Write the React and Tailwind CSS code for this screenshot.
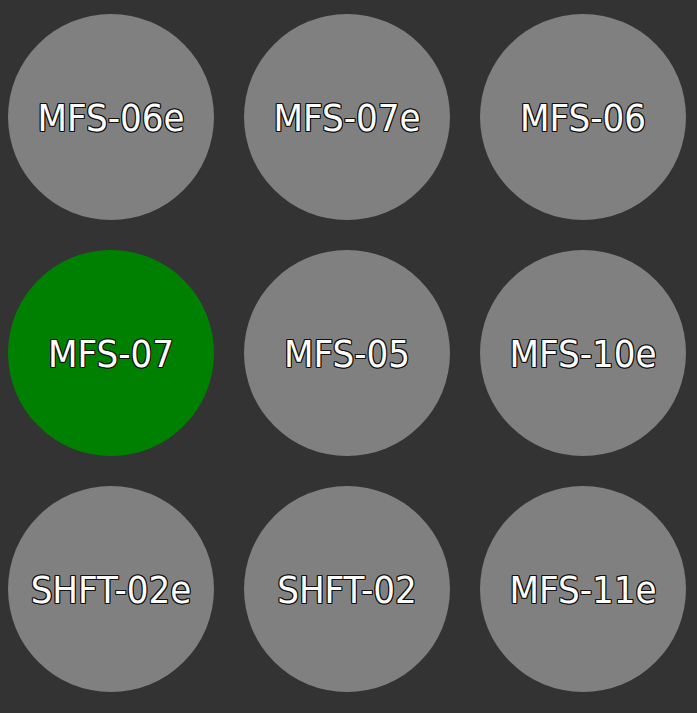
const units = [
  { name: "MFS-06e", active: false },
  { name: "MFS-07e", active: false },
  { name: "MFS-06", active: false },
  { name: "MFS-07", active: true },
  { name: "MFS-05", active: false },
  { name: "MFS-10e", active: false },
  { name: "SHFT-02e", active: false },
  { name: "SHFT-02", active: false },
  { name: "MFS-11e", active: false },
];

export default function App() {
  return (
    <div className="min-h-screen w-full bg-[#333333] pl-[8px] pt-[14px]">
      <div className="grid grid-cols-[repeat(3,206px)] gap-[30px]">
        {units.map((u) => (
          <div
            key={u.name}
            className={
              u.active
                ? "w-[206px] h-[206px] rounded-full bg-[#008000] flex items-center justify-center"
                : "w-[206px] h-[206px] rounded-full bg-[#808080] flex items-center justify-center"
            }
          >
            {/* white label with a thin black outline */}
            <span className="text-white text-[38px] leading-none pt-[1px] font-['DejaVu_Sans_Condensed','DejaVu_Sans',sans-serif] [text-shadow:-1px_-1px_0_#111,1px_-1px_0_#111,-1px_1px_0_#111,1px_1px_0_#111,0_1px_0_#111,0_-1px_0_#111,1px_0_0_#111,-1px_0_0_#111]">
              {u.name}
            </span>
          </div>
        ))}
      </div>
    </div>
  );
}
